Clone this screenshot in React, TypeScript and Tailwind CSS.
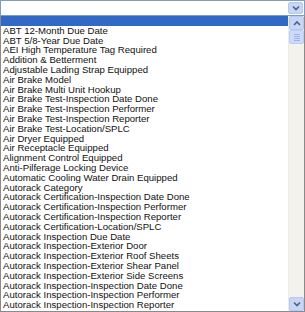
import React from "react";

const items = [
  "ABT 12-Month Due Date",
  "ABT 5/8-Year Due Date",
  "AEI High Temperature Tag Required",
  "Addition & Betterment",
  "Adjustable Lading Strap Equipped",
  "Air Brake Model",
  "Air Brake Multi Unit Hookup",
  "Air Brake Test-Inspection Date Done",
  "Air Brake Test-Inspection Performer",
  "Air Brake Test-Inspection Reporter",
  "Air Brake Test-Location/SPLC",
  "Air Dryer Equipped",
  "Air Receptacle Equipped",
  "Alignment Control Equipped",
  "Anti-Pilferage Locking Device",
  "Automatic Cooling Water Drain Equipped",
  "Autorack Category",
  "Autorack Certification-Inspection Date Done",
  "Autorack Certification-Inspection Performer",
  "Autorack Certification-Inspection Reporter",
  "Autorack Certification-Location/SPLC",
  "Autorack Inspection Due Date",
  "Autorack Inspection-Exterior Door",
  "Autorack Inspection-Exterior Roof Sheets",
  "Autorack Inspection-Exterior Shear Panel",
  "Autorack Inspection-Exterior Side Screens",
  "Autorack Inspection-Inspection Date Done",
  "Autorack Inspection-Inspection Performer",
  "Autorack Inspection-Inspection Reporter",
];

function Chevron({ up = false }: { up?: boolean }) {
  return (
    <svg width="8" height="6" viewBox="0 0 8 6">
      <path
        d={up ? "M1 5 L4 2 L7 5" : "M1 1.5 L4 4.5 L7 1.5"}
        fill="none"
        stroke="#4d6185"
        strokeWidth="1.6"
      />
    </svg>
  );
}

export default function App() {
  return (
    <div
      className="w-[305px] h-[312px] bg-white flex flex-col overflow-hidden"
      style={{ fontFamily: '"Liberation Sans", Arial, sans-serif' }}
    >
      <div className="h-[16px] border border-[#7f9db9] bg-white flex justify-end p-px">
        <div className="w-[15px] h-full rounded-[2px] bg-[#c8d6f6] border border-[#b5c8f0] flex items-center justify-center">
          <Chevron />
        </div>
      </div>
      <div className="flex-1 border border-[#8a8a8a] border-t-0 flex min-h-0">
        <div className="flex-1 flex flex-col text-[9.6px] text-[#111]">
          <div className="h-[9.8px] bg-[#3169c6] shrink-0" />
          {items.map((t) => (
            <div key={t} className="h-[9.8px] leading-[9.8px] pl-[2px] whitespace-nowrap shrink-0">
              {t}
            </div>
          ))}
        </div>
        <div className="w-[16px] bg-[#f3f2ec] flex flex-col justify-between border-l border-[#eeede5]">
          <div className="flex flex-col">
            <div className="h-[14px] rounded-[2px] bg-[#c8d6f6] border border-[#b5c8f0] flex items-center justify-center">
              <Chevron up />
            </div>
            <div className="h-[14px] rounded-[2px] bg-[#cddbfa] border border-[#bccdf3] flex flex-col items-center justify-center gap-px">
              <div className="w-[6px] h-px bg-[#9fb3e2]" />
              <div className="w-[6px] h-px bg-[#9fb3e2]" />
              <div className="w-[6px] h-px bg-[#9fb3e2]" />
              <div className="w-[6px] h-px bg-[#9fb3e2]" />
            </div>
          </div>
          <div className="h-[14px] rounded-[2px] bg-[#c8d6f6] border border-[#b5c8f0] flex items-center justify-center">
            <Chevron />
          </div>
        </div>
      </div>
    </div>
  );
}
